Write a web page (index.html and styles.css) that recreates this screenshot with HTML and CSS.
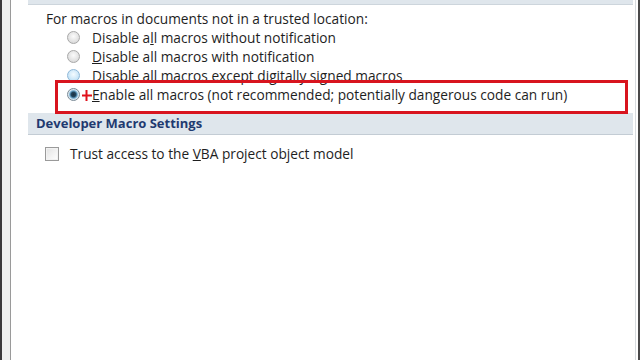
FILE: index.html
```html
<!DOCTYPE html>
<html>
<head>
<meta charset="utf-8">
<link rel="stylesheet" href="styles.css">
</head>
<body>
<div class="window">
  <div class="leftframe"></div>
  <div class="content">
    <div class="topband"></div>
    <div class="group">
      <div class="label">For macros in documents not in a trusted location:</div>
      <div class="row"><span class="radio"></span><span class="text">Disable a<u>l</u>l macros without notification</span></div>
      <div class="row"><span class="radio"></span><span class="text"><u>D</u>isable all macros with notification</span></div>
      <div class="row"><span class="radio hover"></span><span class="text">Disable all macros except digitally signed macros</span></div>
      <div class="row"><span class="radio checked"></span><span class="cursor"><svg width="10" height="12" viewBox="0 0 10 12"><path d="M0 6.5H10M4.5 1V12" stroke="#e0101a" stroke-width="2" fill="none"/></svg></span><span class="text"><u>E</u>nable all macros (not recommended; potentially dangerous code can run)</span></div>
      <div class="highlight"></div>
    </div>
    <div class="band">Developer Macro Settings</div>
    <div class="checkrow"><span class="checkbox"></span><span class="text">Trust access to the <u>V</u>BA project object model</span></div>
  </div>
  <div class="rightframe"></div>
</div>
</body>
</html>
```
FILE: styles.css
```css
html, body {
  margin: 0;
  padding: 0;
  width: 640px;
  height: 360px;
  overflow: hidden;
  background: #ffffff;
}
.window {
  display: flex;
  width: 640px;
  height: 360px;
  font-family: "Open Sans", "Noto Sans", sans-serif;
  font-size: 13.7px;
  color: #1e1e1e;
}
.leftframe {
  width: 8px;
  flex: none;
  background: #eef0ee;
  border-left: 2px solid #3a3a3a;
  border-right: 1px solid #9a9a9a;
}
.content {
  flex: 1;
  background: #ffffff;
  padding-left: 17px;
  padding-right: 2px;
  display: flex;
  flex-direction: column;
}
.rightframe {
  width: 2px;
  flex: none;
  border-left: 1px solid #d8dcdf;
  background: #ffffff;
  border-right: 2px solid #4a4a4a;
}
.topband {
  height: 4px;
  background: #dfe6ec;
  border-bottom: 1px solid #cdd5dc;
}
.group {
  position: relative;
  padding-top: 4px;
  padding-bottom: 4px;
}
.label {
  height: 19px;
  line-height: 19px;
  padding-left: 18px;
  white-space: nowrap;
}
.row {
  height: 19px;
  display: flex;
  align-items: center;
  padding-left: 39px;
}
.row .text {
  margin-left: 12px;
  line-height: 19px;
  white-space: nowrap;
}
.cursor {
  width: 0;
  position: relative;
}
.cursor svg {
  position: absolute;
  left: 2px;
  top: -6px;
}
.radio {
  width: 11px;
  height: 11px;
  border-radius: 50%;
  border: 1px solid #a8a8a8;
  background: radial-gradient(circle at 50% 40%, #fbfbfb 0%, #e4e4e4 55%, #cfcfcf 100%);
  flex: none;
}
.radio.hover {
  border-color: #8fb8d8;
  background: radial-gradient(circle at 50% 40%, #f4fbff 0%, #cfe8f8 55%, #a9d2ee 100%);
}
.radio.checked {
  border-color: #7a8a96;
  background: radial-gradient(circle at 50% 50%, #1d2f40 0%, #24475f 30%, #6ea9cf 48%, #d8e6ee 62%, #e8eef2 100%);
}
.highlight {
  position: absolute;
  left: 27px;
  top: 75px;
  width: 567px;
  height: 28px;
  border: 3px solid #d8141e;
}
.band {
  height: 21px;
  line-height: 21px;
  margin-top: 5px;
  background: #dfe6ec;
  border-bottom: 1px solid #c3ccd4;
  padding-left: 8px;
  font-weight: bold;
  font-size: 13px;
  color: #1f3a70;
}
.checkrow {
  display: flex;
  align-items: center;
  height: 19px;
  margin-top: 9px;
  padding-left: 17px;
}
.checkbox {
  width: 12px;
  height: 12px;
  border: 1px solid #9a9a9a;
  background: linear-gradient(135deg, #e2e2e2 0%, #f4f4f4 60%, #ffffff 100%);
  box-shadow: inset 0 0 0 1px #f2f2f2;
  flex: none;
}
.checkrow .text {
  margin-left: 11px;
  white-space: nowrap;
}
u {
  text-decoration: underline;
  text-underline-offset: 1px;
}
```
